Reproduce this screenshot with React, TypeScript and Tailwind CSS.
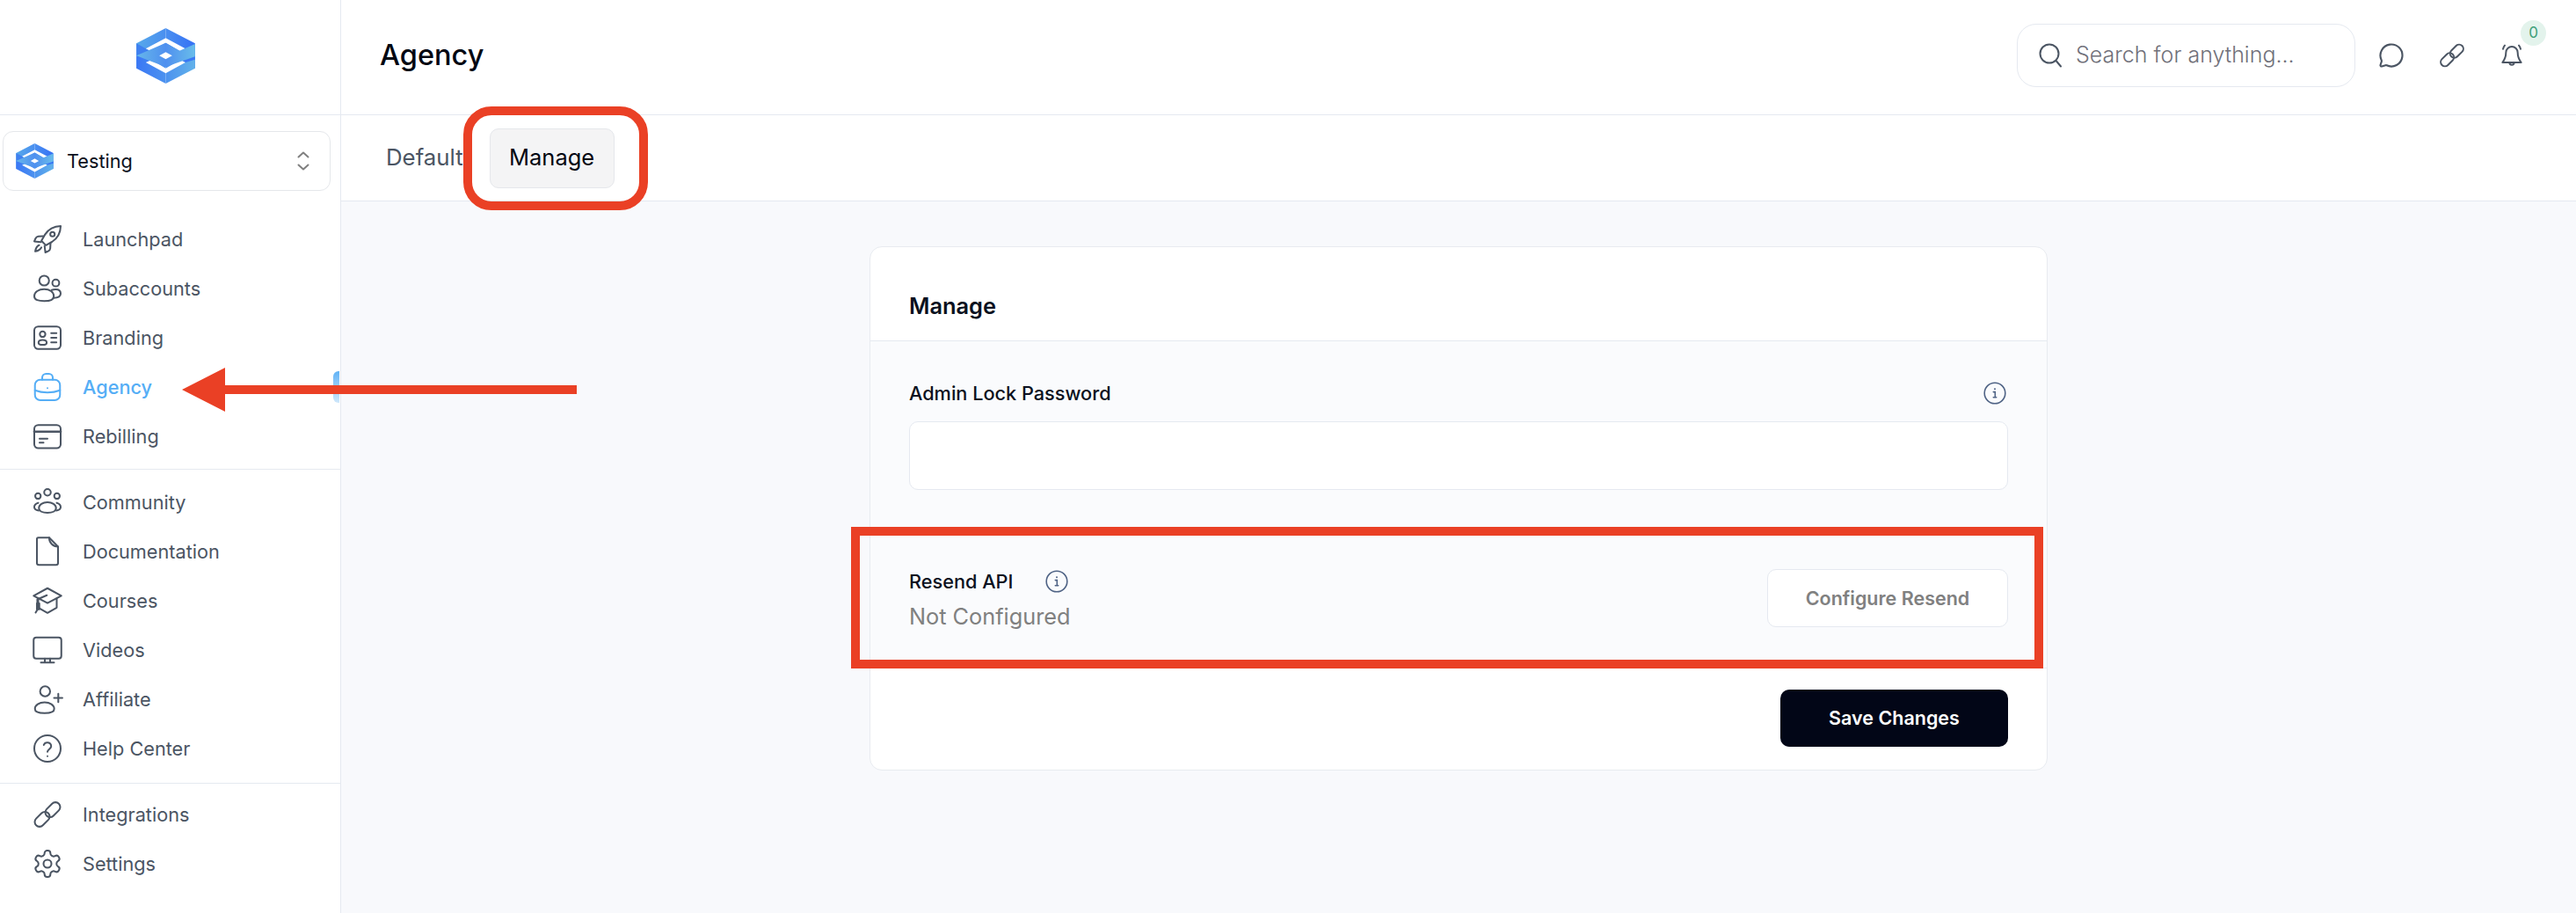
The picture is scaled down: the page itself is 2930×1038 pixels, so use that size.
import { MessageCircle } from 'lucide-react'
import type { ReactNode } from 'react'

function Logo({ className, id }: { className: string; id: string }) {
  return (
    <svg viewBox="18 18 200 189" className={className}>
      <defs>
        <linearGradient id={`${id}-a`} x1="0" x2="1" y1="0" y2="0">
          <stop offset="0" stopColor="#57a9ea" />
          <stop offset="1" stopColor="#4a8ff0" />
        </linearGradient>
        <linearGradient id={`${id}-b`} x1="0" x2="1" y1="0" y2="0">
          <stop offset="0" stopColor="#4a8ff0" />
          <stop offset="1" stopColor="#3571f5" />
        </linearGradient>
        <linearGradient id={`${id}-c`} x1="0" x2="1" y1="0" y2="0">
          <stop offset="0" stopColor="#3a77f5" />
          <stop offset="1" stopColor="#4c92ef" />
        </linearGradient>
        <linearGradient id={`${id}-d`} x1="0" x2="1" y1="0" y2="0">
          <stop offset="0" stopColor="#4c92ef" />
          <stop offset="1" stopColor="#62b2ea" />
        </linearGradient>
        <linearGradient id={`${id}-e`} x1="0" x2="1" y1="0" y2="0">
          <stop offset="0" stopColor="#66b7ea" />
          <stop offset="0.5" stopColor="#4f90ef" />
          <stop offset="1" stopColor="#69bdea" />
        </linearGradient>
      </defs>
      <polygon points="18,70 118,18 118,118 18,155" fill={`url(#${id}-a)`} />
      <polygon points="118,18 218,70 218,155 118,118" fill={`url(#${id}-b)`} />
      <polygon points="18,112 118,118 118,207 18,155" fill={`url(#${id}-c)`} />
      <polygon points="118,118 218,112 218,155 118,207" fill={`url(#${id}-d)`} />
      <polygon points="18,70 50,88 68,97 18,112" fill="#3f80f0" />
      <polygon points="218,112 218,125 185,135 168,126" fill="#3a78f4" />
      <polygon points="50,88 118,52 185,88 168,97 118,68 68,97" fill="#fff" />
      <polygon points="50,135 118,172 185,135 168,126 118,155 70,126" fill="#fff" />
      <polygon points="18,112 118,68 165,95 218,72 218,115 118,150 70,132" fill={`url(#${id}-e)`} />
      <polygon points="118,100 140,112 118,124 96,112" fill="#fff" />
    </svg>
  )
}

function Icon({ children, className = 'h-9 w-9', stroke = 1.35 }: { children: ReactNode; className?: string; stroke?: number }) {
  return (
    <svg
      viewBox="0 0 24 24"
      fill="none"
      stroke="currentColor"
      strokeWidth={stroke}
      strokeLinecap="round"
      strokeLinejoin="round"
      className={`shrink-0 ${className}`}
    >
      {children}
    </svg>
  )
}

const chain = (
  <>
    <rect x="9.500" y="4.800" width="13" height="7.200" rx="3.600" transform="rotate(-45 16 8.400)" />
    <rect x="1.500" y="12" width="13" height="7.200" rx="3.600" transform="rotate(-45 8 15.600)" />
  </>
)

function InfoIcon() {
  return (
    <svg viewBox="0 0 26 26" fill="none" className="h-[26px] w-[26px] shrink-0 text-[#4f6385]" stroke="currentColor">
      <circle cx="13" cy="13" r="11.800" strokeWidth="1.600" />
      <path d="M11.300 11.600h2v6.200h1.400M11.300 17.800h1.600" strokeWidth="1.600" strokeLinecap="round" />
      <circle cx="13" cy="8.300" r="1" fill="currentColor" stroke="none" />
    </svg>
  )
}

const topItems = [
  {
    label: 'Launchpad',
    icon: (
      <>
        <path d="M22 2c-5.200.1-9.300 2.400-12 6.600l-2.600 4.600 3.400 3.400 4.600-2.600C19.600 11.300 21.900 7.200 22 2z" />
        <circle cx="15.800" cy="8.200" r="1.700" />
        <path d="M8.800 9.700l-3.700.2c-1 .1-1.800.7-2.200 1.600L2 13.600l5 .6" />
        <path d="M14.300 15.200l-.2 3.700c-.1 1-.7 1.800-1.600 2.200l-2.100.9-.6-5" />
        <path d="M5.700 16.500c-1.500.6-2.600 2.200-3 4.700 2.500-.4 4-1.500 4.700-3" />
      </>
    ),
  },
  {
    label: 'Subaccounts',
    icon: (
      <>
        <circle cx="9.500" cy="6" r="3.700" />
        <circle cx="18.300" cy="7.800" r="2.600" />
        <path d="M2 17.800c0-3 3.200-5.300 7.500-5.300s7.300 2.300 7.300 5.300-3.100 3.700-7.300 3.700S2 20.800 2 17.800z" />
        <path d="M15.200 13.200c.9-.4 1.900-.6 3-.6 2.400 0 3.800 1.400 3.800 3.300s-1.700 3.300-5.600 3.300" />
      </>
    ),
  },
  {
    label: 'Branding',
    icon: (
      <>
        <rect x="2" y="3.500" width="20" height="17" rx="3" />
        <circle cx="8.300" cy="9.300" r="2.100" />
        <path d="M5.200 15.800c0-1.400 1.300-2.100 3.100-2.100s3.100.7 3.100 2.100-1.300 1.600-3.100 1.600-3.100-.2-3.100-1.600z" />
        <path d="M14.800 8.500h4M14.800 12h4M14.800 15.500h4" />
      </>
    ),
  },
  {
    label: 'Agency',
    active: true,
    icon: (
      <>
        <rect x="2.500" y="6.500" width="19" height="15.500" rx="4" />
        <path d="M8 6.500V5a3 3 0 0 1 3-3h2a3 3 0 0 1 3 3v1.500" />
        <path d="M2.500 14.500c3 1.200 6 1.700 9.500 1.700s6.500-.5 9.500-1.700" />
        <path d="M12 12.800v.1" />
      </>
    ),
  },
  {
    label: 'Rebilling',
    icon: (
      <>
        <rect x="2" y="3.500" width="20" height="17.500" rx="3" />
        <path d="M2 8.500h20" strokeWidth="1.800" />
        <path d="M6 13.800h6M6 16.800h3" />
      </>
    ),
  },
]

const midItems = [
  {
    label: 'Community',
    icon: (
      <>
        <circle cx="12" cy="4.500" r="2.500" />
        <circle cx="4.800" cy="7.300" r="2.100" />
        <circle cx="19.200" cy="7.300" r="2.100" />
        <path d="M5.500 16.300c0-2.500 3-4.300 6.500-4.300s6.500 1.800 6.500 4.300-3 3.700-6.500 3.700-6.500-1.200-6.500-3.700z" />
        <path d="M5 12.500c-1.900.5-3 1.900-3 3.200s1.100 2.300 3.300 2.600M19 12.500c1.900.5 3 1.900 3 3.200s-1.100 2.300-3.300 2.600" />
      </>
    ),
  },
  {
    label: 'Documentation',
    icon: (
      <>
        <path d="M5 1.500h8.300L20 8.300v12.400a1.500 1.500 0 0 1-1.500 1.500h-13a1.500 1.500 0 0 1-1.500-1.500V2.500a1 1 0 0 1 1-1z" />
        <path d="M13.300 1.500c0 3.900 2.800 6.800 6.700 6.800" />
      </>
    ),
  },
  {
    label: 'Courses',
    icon: (
      <>
        <path d="M12 2.500l10.500 5.700L12 13.800 1.500 8.200z" />
        <path d="M5 10.200v7l7 4 7-4v-7" />
        <path d="M11.500 7.800 4.300 11v6.500" />
        <path d="M4 14h1.800v4.500H4zM4.500 18.500 3 21" />
      </>
    ),
  },
  {
    label: 'Videos',
    icon: (
      <>
        <rect x="1.500" y="2.500" width="21" height="16" rx="2" />
        <path d="M10 18.500v3M14 18.500v3M7 21.500h10" />
      </>
    ),
  },
  {
    label: 'Affiliate',
    icon: (
      <>
        <circle cx="10.200" cy="6" r="3.800" />
        <path d="M2.500 19.300c0-2.700 3.200-5 7.300-5s7.300 2.300 7.300 5-3.200 3.200-7.300 3.200-7.300-.5-7.300-3.200z" />
        <path d="M20.200 7.800v6.300M17 11h6.300" />
      </>
    ),
  },
  {
    label: 'Help Center',
    icon: (
      <>
        <circle cx="12" cy="12" r="10" />
        <path d="M9.200 9.300a2.900 2.900 0 0 1 5.600 1c0 1.900-2.800 2.400-2.800 4.200" />
        <path d="M12 17.800v.1" />
      </>
    ),
  },
]

const bottomItems = [
  { label: 'Integrations', icon: chain },
  {
    label: 'Settings',
    icon: (
      <>
        <path d="M12.220 2h-.44a2 2 0 0 0-2 2v.18a2 2 0 0 1-1 1.730l-.43.25a2 2 0 0 1-2 0l-.15-.08a2 2 0 0 0-2.730.73l-.22.38a2 2 0 0 0 .73 2.730l.15.1a2 2 0 0 1 1 1.720v.51a2 2 0 0 1-1 1.740l-.15.09a2 2 0 0 0-.73 2.730l.22.38a2 2 0 0 0 2.730.73l.15-.08a2 2 0 0 1 2 0l.43.25a2 2 0 0 1 1 1.730V20a2 2 0 0 0 2 2h.44a2 2 0 0 0 2-2v-.18a2 2 0 0 1 1-1.730l.43-.25a2 2 0 0 1 2 0l.15.08a2 2 0 0 0 2.730-.73l.22-.39a2 2 0 0 0-.73-2.730l-.15-.08a2 2 0 0 1-1-1.740v-.5a2 2 0 0 1 1-1.740l.15-.09a2 2 0 0 0 .73-2.730l-.22-.38a2 2 0 0 0-2.730-.73l-.15.08a2 2 0 0 1-2 0l-.43-.25a2 2 0 0 1-1-1.730V4a2 2 0 0 0-2-2z" />
        <circle cx="12" cy="12" r="3" />
      </>
    ),
  },
]

function NavItem({ label, icon, active }: { label: string; icon: ReactNode; active?: boolean }) {
  return (
    <a className={`flex h-[56px] items-center gap-[22px] pl-[36px] text-[21.7px] ${active ? 'font-medium text-[#55aef6]' : 'text-[#4b5563]'}`}>
      <Icon>{icon}</Icon>
      {label}
    </a>
  )
}

function Sidebar() {
  return (
    <aside className="flex w-[388px] shrink-0 flex-col border-r border-[#e5e9f0] bg-white">
      <div className="flex h-[131px] shrink-0 items-center justify-center border-b border-[#e5e9f0] pr-[10px] pb-[4px]">
        <Logo id="main" className="h-[63px] w-[67px]" />
      </div>
      <div className="mt-[18px] ml-[3px] flex h-[68px] w-[373px] items-center rounded-[12px] border border-[#e5e7eb] pr-[23px] pl-[14px]">
        <Logo id="small" className="h-[40px] w-[43px]" />
        <span className="ml-[15px] flex-1 text-[21.7px] text-[#0b1120]">Testing</span>
        <svg viewBox="0 0 14 22" fill="none" stroke="#808080" strokeWidth="2" strokeLinecap="round" strokeLinejoin="round" className="h-[22px] w-[14px]">
          <path d="M1.500 6.500 7 1.500l5.500 5M1.500 15.500 7 20.500l5.500-5" />
        </svg>
      </div>
      <nav className="mt-[27px] border-b border-[#e5e9f0] pb-[9px]">
        {topItems.map((item) => (
          <NavItem key={item.label} {...item} />
        ))}
      </nav>
      <nav className="border-b border-[#e5e9f0] pt-[9px] pb-[11px]">
        {midItems.map((item) => (
          <NavItem key={item.label} {...item} />
        ))}
      </nav>
      <nav className="pt-[7px]">
        {bottomItems.map((item) => (
          <NavItem key={item.label} {...item} />
        ))}
      </nav>
    </aside>
  )
}

function Header() {
  return (
    <header className="flex h-[131px] shrink-0 items-center justify-between border-b border-[#e5e9f0] bg-white pr-[57px] pb-[4px] pl-[44px]">
      <h1 className="text-[32.500px] font-medium text-[#030712]">Agency</h1>
      <div className="flex items-center">
        <div className="flex h-[72px] w-[385px] items-center gap-[16px] rounded-[22px] border border-[#e5e9f0] pl-[24px] text-[#4b5563]">
          <svg viewBox="0 0 26 28" fill="none" stroke="currentColor" strokeWidth="2" strokeLinecap="round" className="h-[28px] w-[26px]">
            <circle cx="12" cy="12" r="10.500" />
            <path d="M20 20.500l5 6" />
          </svg>
          <span className="text-[25px] font-light text-[#71717a]">Search for anything...</span>
        </div>
        <MessageCircle className="ml-[26px] h-[30px] w-[30px] text-[#4b5563]" strokeWidth={1.7} />
        <Icon className="ml-[38px] h-[32px] w-[32px] text-[#4b5563]" stroke={1.5}>
          {chain}
        </Icon>
        <div className="relative ml-[36px] h-[32px] w-[32px] text-[#4b5563]">
          <Icon className="h-[32px] w-[32px]" stroke={1.5}>
            <path d="M7 9.500a5 5 0 0 1 10 0c0 4.500 1.500 6.500 3 8.500H4c1.500-2 3-4 3-8.500z" />
            <path d="M10 18a2 2 0 0 0 4 0M4.500 6.500c.3-1.200.8-2.200 1.500-3M19.500 6.500c-.3-1.200-.8-2.200-1.500-3" />
          </Icon>
          <span className="absolute -top-[24px] left-[26px] flex h-[29px] w-[29px] items-center justify-center rounded-full bg-[#e3f3ec] text-[17px] text-[#3f9f7a]">
            0
          </span>
        </div>
      </div>
    </header>
  )
}

function Card() {
  return (
    <section className="flex h-[596px] w-[1340px] flex-col overflow-hidden rounded-[14px] border border-[#e8ebf0] bg-white">
      <div className="flex h-[107px] shrink-0 items-center border-b border-[#e5e9f0] px-[44px] pt-[28px]">
        <h2 className="text-[25.400px] font-semibold text-[#0b1120]">Manage</h2>
      </div>
      <div className="flex-1 border-b border-[#e8ebf0] bg-[#fafbfd] px-[44px]">
        <div className="flex items-center justify-between pt-[45px] pr-[2px]">
          <label className="text-[21.700px] font-medium leading-[28px] text-[#0b1120]">Admin Lock Password</label>
          <InfoIcon />
        </div>
        <div className="mt-[18px] h-[78px] rounded-[10px] border border-[#e5e9f0] bg-white" />
        <div className="mt-[90px] flex items-start justify-between">
          <div>
            <div className="flex items-center gap-[37px]">
              <span className="text-[21.700px] font-medium leading-[28px] text-[#0b1120]">Resend API</span>
              <InfoIcon />
            </div>
            <p className="mt-[10px] text-[25.300px] leading-[32px] text-[#808080]">Not Configured</p>
          </div>
          <button className="h-[66px] w-[274px] rounded-[10px] border border-[#e5e9f0] bg-white text-[21.500px] font-semibold text-[#808080]">
            Configure Resend
          </button>
        </div>
      </div>
      <div className="flex h-[115px] shrink-0 items-start justify-end px-[44px] pt-[24px]">
        <button className="h-[65px] w-[259px] rounded-[10px] bg-[#020617] text-[21.500px] font-semibold text-white">Save Changes</button>
      </div>
    </section>
  )
}

export default function App() {
  return (
    <div className="relative flex h-screen overflow-hidden bg-[#f8f9fc] font-[Inter,sans-serif]">
      <Sidebar />
      <main className="flex min-w-0 flex-1 flex-col">
        <Header />
        <div className="flex h-[98px] shrink-0 items-center border-b border-[#e5e9f0] bg-white pl-[51px]">
          <span className="text-[25.800px] text-[#4b5563]">Default</span>
          <span className="ml-[30px] flex h-[68px] w-[142px] items-center justify-center rounded-[10px] border border-[#e5e7eb] bg-[#f4f4f5] text-[25.500px] font-normal text-[#030712]">
            Manage
          </span>
        </div>
        <div className="flex flex-1 justify-center pt-[51px]">
          <Card />
        </div>
      </main>

      {/* annotations */}
      <div className="absolute top-[121px] left-[527px] h-[118px] w-[210px] rounded-[32px] border-[10px] border-[#ea4025]" />
      <div className="absolute top-[599px] left-[968px] h-[161px] w-[1356px] border-[10px] border-[#ea4025]" />
      <div className="absolute top-[422px] left-[379px] h-[36px] w-[7px] rounded-l-[6px] bg-gradient-to-b from-[#5fb2f5] to-[#cfe8fb]" />
      <svg viewBox="0 0 450 50" className="absolute top-[418px] left-[207px] h-[50px] w-[450px]">
        <polygon points="0,25 49,0 49,20 449,20 449,30 49,30 49,50" fill="#ea4025" />
      </svg>
    </div>
  )
}
